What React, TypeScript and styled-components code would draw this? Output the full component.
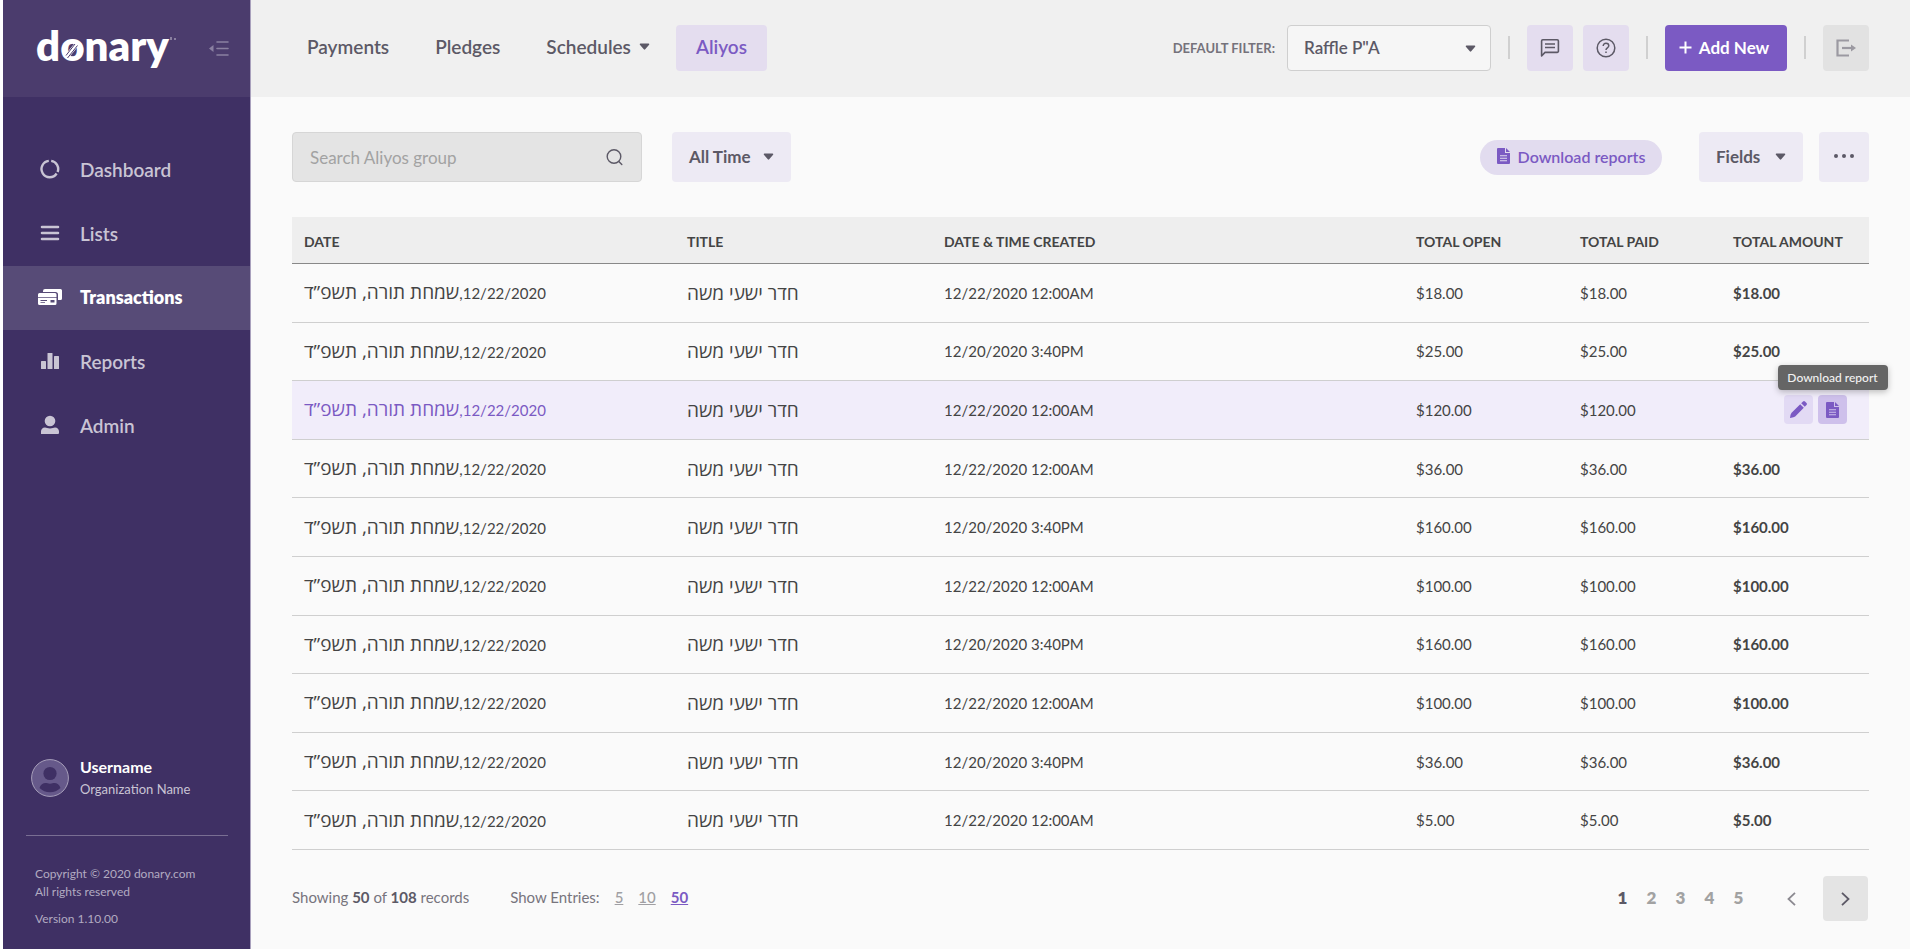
import React from 'react';
import styled, { createGlobalStyle, css } from 'styled-components';

const color = {
  purple: '#7b5ac3',
  purplePale: '#e4ddef',
  purpleFaint: '#edeaf4',
  ink: '#5c5966',
  text: '#444444',
  sidebar: '#3f3064',
  page: '#fafafa',
};

const GlobalStyle = createGlobalStyle`
  *, *::before, *::after { box-sizing: border-box; }
  body {
    margin: 0;
    background: #ffffff;
    color: ${color.text};
    font-family: Lato, 'Open Sans', 'Liberation Sans', sans-serif;
    font-size: 15px;
  }
  button, input, select { font: inherit; color: inherit; }
  button { border: 0; padding: 0; background: none; cursor: pointer; }
  a { color: inherit; text-decoration: none; }
  svg { display: block; flex: none; }
`;

const Page = styled.div`
  display: flex;
  min-height: 100vh;
  padding: 0 3px;
`;

/* ---------- Sidebar ---------- */

const Sidebar = styled.aside`
  display: flex;
  flex-direction: column;
  flex: none;
  width: 248px;
  background: ${color.sidebar};
  border-right: 1px solid #a9a1bd;
  color: #c9c4d4;
`;

const Brand = styled.div`
  display: flex;
  align-items: center;
  justify-content: space-between;
  height: 97px;
  padding: 0 21px 0 33px;
  background: #4b3c6d;
`;

const SideNav = styled.nav`
  display: flex;
  flex-direction: column;
  padding-top: 41px;
`;

const SideLink = styled.a<{ $active?: boolean }>`
  display: flex;
  align-items: center;
  gap: 17px;
  height: 64px;
  padding: 0 0 2px 34px;
  font-size: 19px;
  font-weight: 600;
  ${({ $active }) =>
    $active &&
    css`
      background: #574b77;
      color: #ffffff;
      font-size: 18px;
      font-weight: 800;
    `}
`;

const SideIcon = styled.span`
  display: flex;
  justify-content: center;
  width: 26px;
`;

const User = styled.div`
  display: flex;
  align-items: center;
  gap: 11px;
  margin-top: auto;
  padding-left: 28px;
`;

const UserName = styled.div`
  color: #ffffff;
  font-size: 16px;
  font-weight: 700;
  line-height: 22px;
`;

const UserOrg = styled.div`
  font-size: 13px;
  line-height: 22px;
`;

const Divider = styled.hr`
  width: 202px;
  height: 1px;
  margin: 35px 0 29px 23px;
  border: 0;
  background: #796e93;
`;

const Legal = styled.div`
  padding: 0 0 21px 32px;
  color: #b2abc1;
  font-size: 12px;
  line-height: 18px;
  p { margin: 0 0 9px; }
  p:last-child { margin: 0; }
`;

/* ---------- Top bar ---------- */

const Main = styled.main`
  display: flex;
  flex-direction: column;
  flex: 1;
  min-width: 0;
  background: ${color.page};
`;

const TopBar = styled.header`
  display: flex;
  align-items: center;
  height: 97px;
  padding: 0 41px 2px 36px;
  background: #f0f0f0;
`;

const Tabs = styled.nav`
  display: flex;
  align-items: center;
  gap: 6px;
`;

const Tab = styled.a<{ $active?: boolean }>`
  display: flex;
  align-items: center;
  gap: 8px;
  height: 46px;
  padding: 0 20px 2px;
  border-radius: 4px;
  color: ${({ $active }) => ($active ? color.purple : color.ink)};
  background: ${({ $active }) => ($active ? color.purplePale : 'transparent')};
  font-size: 19px;
  font-weight: 600;
`;

const Actions = styled.div`
  display: flex;
  align-items: center;
  margin-left: auto;
`;

const FilterLabel = styled.label`
  margin-right: 12px;
  color: #75727b;
  font-size: 13px;
  font-weight: 700;
`;

const SelectBox = styled.span`
  position: relative;
  width: 204px;
`;

const Select = styled.select`
  appearance: none;
  display: block;
  width: 100%;
  height: 46px;
  padding: 0 36px 0 16px;
  border: 1px solid #cfcfcf;
  border-radius: 4px;
  background: #f6f6f6;
  color: ${color.ink};
  font-size: 17px;
  font-weight: 600;
`;

const SelectCaret = styled.span`
  position: absolute;
  top: 20px;
  right: 15px;
  pointer-events: none;
`;

const Separator = styled.span`
  width: 2px;
  height: 23px;
  margin: 0 17px;
  background: #d0d0d0;
`;

const IconButton = styled.button<{ $muted?: boolean }>`
  display: flex;
  align-items: center;
  justify-content: center;
  width: 46px;
  height: 46px;
  border-radius: 4px;
  background: ${({ $muted }) => ($muted ? '#e2e2e2' : color.purplePale)};
  color: ${({ $muted }) => ($muted ? '#9b99a1' : color.ink)};
  & + & { margin-left: 10px; }
`;

const AddButton = styled.button`
  display: flex;
  align-items: center;
  justify-content: center;
  gap: 7px;
  width: 122px;
  height: 46px;
  padding-right: 4px;
  border-radius: 4px;
  background: ${color.purple};
  color: #ffffff;
  font-size: 17px;
  font-weight: 700;
`;

/* ---------- Content ---------- */

const Content = styled.div`
  flex: 1;
  padding: 35px 41px 28px;
`;

const Toolbar = styled.div`
  display: flex;
  align-items: center;
  margin-bottom: 35px;
`;

const SearchBox = styled.form`
  display: flex;
  align-items: center;
  width: 350px;
  height: 50px;
  margin-right: 30px;
  padding: 0 17px;
  border: 1px solid #d6d6d6;
  border-radius: 4px;
  background: #e4e4e4;
  color: ${color.ink};
`;

const SearchInput = styled.input`
  flex: 1;
  min-width: 0;
  padding: 0;
  border: 0;
  outline: 0;
  background: none;
  font-size: 17px;
  &::placeholder { color: #a2a2a2; opacity: 1; }
`;

const SoftButton = styled.button<{ $width: number }>`
  display: flex;
  align-items: center;
  justify-content: space-between;
  width: ${({ $width }) => $width}px;
  height: 50px;
  padding: 0 17px 2px;
  border-radius: 4px;
  background: ${color.purpleFaint};
  color: ${color.ink};
  font-size: 17px;
  font-weight: 700;
`;

const DownloadButton = styled.button`
  display: flex;
  align-items: center;
  justify-content: center;
  gap: 8px;
  width: 182px;
  height: 35px;
  margin: 0 37px 0 auto;
  padding-bottom: 2px;
  border-radius: 18px;
  background: #e2dcef;
  color: ${color.purple};
  font-size: 16px;
  font-weight: 600;
`;

const MoreButton = styled(SoftButton)`
  margin-left: 16px;
  justify-content: center;
`;

const Table = styled.table`
  width: 100%;
  height: calc(100vh - 316px);
  min-height: 520px;
  border-collapse: separate;
  border-spacing: 0;
  table-layout: fixed;
`;

const HeadCell = styled.th`
  height: 47px;
  padding: 2px 0 0 12px;
  border-bottom: 1px solid #888888;
  background: #eeeeee;
  font-size: 14px;
  font-weight: 700;
  text-align: left;
`;

const Row = styled.tr<{ $hover?: boolean }>`
  background: ${({ $hover }) => ($hover ? '#f1edfa' : 'transparent')};
`;

const Cell = styled.td<{ $accent?: boolean; $strong?: boolean }>`
  height: 48px;
  padding: 0 0 0 12px;
  border-bottom: 1px solid #cfcfcf;
  color: ${({ $accent }) => ($accent ? color.purple : color.text)};
  font-weight: ${({ $strong }) => ($strong ? 700 : 400)};
  white-space: nowrap;
`;

const Hebrew = styled.bdi`
  font-family: 'Open Sans', 'Liberation Sans', sans-serif;
  font-size: 19px;
  line-height: 20px;
`;

const HebrewDate = styled.span`
  font-family: Lato, 'Open Sans', sans-serif;
  font-size: 15px;
`;

const RowActions = styled.div`
  display: flex;
  justify-content: flex-end;
  gap: 5px;
  padding-right: 22px;
`;

const RowButton = styled.button<{ $pressed?: boolean }>`
  position: relative;
  display: flex;
  align-items: center;
  justify-content: center;
  width: 29px;
  height: 29px;
  border-radius: 4px;
  background: ${({ $pressed }) => ($pressed ? '#cec0eb' : '#e2daf4')};
  color: ${color.purple};
`;

const Tooltip = styled.span`
  position: absolute;
  bottom: 34px;
  left: 50%;
  transform: translateX(-50%);
  width: 110px;
  border-radius: 4px;
  background: #656565;
  box-shadow: 0 2px 6px rgba(0, 0, 0, 0.25);
  color: #f2f2f2;
  font-size: 12px;
  font-weight: 500;
  line-height: 25px;
  white-space: nowrap;
`;

const Footer = styled.footer`
  display: flex;
  align-items: center;
  margin-top: 26px;
  padding-right: 1px;
  color: #77747d;
`;

const Summary = styled.p`
  margin: 0 41px 0 0;
  padding-bottom: 4px;
  b { color: ${color.ink}; }
`;

const Entries = styled.div`
  display: flex;
  gap: 15px;
  padding-bottom: 4px;
`;

const EntryLink = styled.a<{ $active?: boolean }>`
  color: ${({ $active }) => ($active ? color.purple : '#a09fa3')};
  font-weight: ${({ $active }) => ($active ? 700 : 500)};
  text-decoration: underline;
`;

const Pager = styled.nav`
  display: flex;
  align-items: center;
  margin-left: auto;
`;

const PageLink = styled.a<{ $active?: boolean }>`
  width: 29px;
  padding-bottom: 2px;
  color: ${({ $active }) => ($active ? color.ink : '#a2a2a2')};
  font-size: 17px;
  font-weight: 800;
  text-align: center;
`;

const PagerButton = styled.button<{ $filled?: boolean }>`
  display: flex;
  align-items: center;
  justify-content: center;
  width: 45px;
  height: 45px;
  margin-left: ${({ $filled }) => ($filled ? 9 : 16)}px;
  border-radius: 4px;
  background: ${({ $filled }) => ($filled ? '#e4e4e4' : 'transparent')};
  color: ${({ $filled }) => ($filled ? color.ink : '#8b8990')};
`;

/* ---------- Icons ---------- */

const Logo = () => (
  <svg width="142" height="64" viewBox="0 0 142 64" role="img" aria-label="donary">
    <text x="0" y="44" fill="#fff" fontFamily="Lato" fontSize="42" fontWeight="800">
      donary
    </text>
    <path d="M30.500 40 40.500 27.500" stroke="#fff" strokeWidth="4.500" />
    <path d="M31.500 41 41.500 28.500M30 38.500 39 27" stroke="#4b3c6d" strokeWidth="1" />
    <path d="M135 20v3M139 21v2" stroke="#c9c4d4" strokeWidth="1" />
  </svg>
);

const CollapseIcon = () => (
  <svg width="20" height="16" viewBox="0 0 20 16">
    <path d="M8 1h11M8 7.500h11M8 14h11" stroke="#8a80a1" strokeWidth="1.600" strokeLinecap="round" />
    <path d="M0 7.500 4.500 4v7z" fill="#8a80a1" />
  </svg>
);

const DashboardIcon = () => (
  <svg width="20" height="20" viewBox="0 0 20 20" fill="none" stroke="currentColor" strokeWidth="2.400">
    <path d="M11.200 1.900A8.200 8.200 0 0 1 17.600 13M16.600 14.500A8.200 8.200 0 1 1 8.800 1.900" />
  </svg>
);

const ListIcon = () => (
  <svg width="20" height="16" viewBox="0 0 20 16" stroke="currentColor" strokeWidth="2.600" strokeLinecap="round">
    <path d="M2 2h16M2 8h16M2 14h16" />
  </svg>
);

const CardsIcon = () => (
  <svg width="26" height="18" viewBox="0 0 26 18">
    <path d="M8 1h15.500A1.500 1.500 0 0 1 25 2.500v8A1.500 1.500 0 0 1 23.500 12H21V6.500A2.500 2.500 0 0 0 18.500 4H6V3a2 2 0 0 1 2-2z" fill="currentColor" />
    <path
      fillRule="evenodd"
      d="M2.500 5H18a1.500 1.500 0 0 1 1.500 1.500v9A1.500 1.500 0 0 1 18 17H2.500A1.500 1.500 0 0 1 1 15.500v-9A1.500 1.500 0 0 1 2.500 5zM1 9v.8h18.500V9zM3.500 12v.9h6.500v-.9zM3.500 14.200v.9H8v-.9zM13.500 12v2.500h4V12z"
      fill="currentColor"
    />
  </svg>
);

const ReportsIcon = () => (
  <svg width="20" height="18" viewBox="0 0 20 18" fill="currentColor">
    <rect x="1" y="9" width="5" height="8" rx=".5" />
    <rect x="7.500" y="1" width="5" height="16" rx=".5" />
    <rect x="14" y="4" width="5" height="13" rx=".5" />
  </svg>
);

const AdminIcon = () => (
  <svg width="20" height="20" viewBox="0 0 20 20" fill="currentColor">
    <circle cx="10" cy="6" r="5.300" />
    <path d="M1 19v-2.500c0-2 1.500-4 4-4 1.500 0 2.500 1 5 1s3.500-1 5-1c2.500 0 4 2 4 4V18a1 1 0 0 1-1 1z" />
  </svg>
);

const Avatar = () => (
  <svg width="38" height="38" viewBox="0 0 38 38">
    <circle cx="19" cy="19" r="18.400" fill="#66598a" stroke="#a79fba" />
    <circle cx="19" cy="14.500" r="6.600" fill="#3f3064" />
    <path d="M8.500 29c1-3.500 3.500-5 6-5 1.500 0 2.500.7 4.500.7s3-.7 4.500-.7c2.500 0 5 1.500 6 5a15 15 0 0 1-21 0z" fill="#3f3064" />
  </svg>
);

const Caret = () => (
  <svg width="11" height="7" viewBox="0 0 11 7">
    <path d="M1.500.5h8c.7 0 1 .7.6 1.200L6.200 6.300a.9.900 0 0 1-1.400 0L.9 1.700C.5 1.200.8.5 1.500.5z" fill="#5c5966" />
  </svg>
);

const ChatIcon = () => (
  <svg width="20" height="20" viewBox="0 0 20 20" fill="none" stroke="currentColor" strokeWidth="1.600" strokeLinejoin="round">
    <path d="M2.800 1.800h14.400a1.200 1.200 0 0 1 1.200 1.200v10.200a1.200 1.200 0 0 1-1.200 1.200H5L1.600 18V3a1.200 1.200 0 0 1 1.200-1.200z" />
    <path d="M5 6h10M5 9.500h10" />
  </svg>
);

const HelpIcon = () => (
  <svg width="20" height="20" viewBox="0 0 20 20" fill="none" stroke="currentColor" strokeWidth="1.500">
    <circle cx="10" cy="10" r="8.800" />
    <path d="M7.200 8c0-1.600 1.200-2.800 2.800-2.800s2.800 1.100 2.800 2.600c0 2-2.800 2.100-2.800 4.100" />
    <path d="M10 13.400v1.700" />
  </svg>
);

const PlusIcon = () => (
  <svg width="13" height="13" viewBox="0 0 13 13" stroke="currentColor" strokeWidth="2">
    <path d="M6.500.5v12M.5 6.500h12" />
  </svg>
);

const LogoutIcon = () => (
  <svg width="20" height="18" viewBox="0 0 20 18" fill="none" stroke="currentColor" strokeWidth="2.200">
    <path d="M13 1.500H1.500v15H13" />
    <path d="M6 9h10" />
    <path d="M15 5.500 20 9l-5 3.500z" fill="currentColor" stroke="none" />
  </svg>
);

const SearchIcon = () => (
  <svg width="19" height="19" viewBox="0 0 19 19" fill="none" stroke="currentColor" strokeWidth="1.400" strokeLinecap="round">
    <circle cx="9" cy="8.500" r="6.800" />
    <path d="m13.800 13.500 3 3" />
  </svg>
);

const FileIcon = () => (
  <svg width="13" height="16" viewBox="0 0 13 16">
    <path
      fillRule="evenodd"
      d="M1 0h7v5h5v10a1 1 0 0 1-1 1H1a1 1 0 0 1-1-1V1a1 1 0 0 1 1-1zM3 7.200v1h7v-1zM3 9.700v1h7v-1zM3 12.200v1h7v-1z"
      fill="currentColor"
    />
    <path d="M9 0l4 4H9z" fill="currentColor" />
  </svg>
);

const PencilIcon = () => (
  <svg width="17" height="17" viewBox="0 0 17 17" fill="currentColor">
    <path d="M10.200 3.200 13.800 6.800 5.200 15.400Q4.300 16.300 0 17 .300 13 1.600 11.800z" />
    <path d="M11.200 2.200 13 .5a1.500 1.500 0 0 1 2 0L16.500 2a1.500 1.500 0 0 1 0 2L14.800 5.800z" />
  </svg>
);

const DotsIcon = () => (
  <svg width="22" height="6" viewBox="0 0 22 6" fill="currentColor">
    <circle cx="3" cy="3" r="2" />
    <circle cx="11" cy="3" r="2" />
    <circle cx="19" cy="3" r="2" />
  </svg>
);

const Chevron = ({ left }: { left?: boolean }) => (
  <svg width="9" height="14" viewBox="0 0 9 14" fill="none" stroke="currentColor" strokeWidth="1.800">
    <path d={left ? 'M8 .8 1.500 7 8 13.200' : 'M1 .8 7.500 7 1 13.200'} />
  </svg>
);

/* ---------- Data ---------- */

const sideLinks = [
  { label: 'Dashboard', Icon: DashboardIcon },
  { label: 'Lists', Icon: ListIcon },
  { label: 'Transactions', Icon: CardsIcon, active: true },
  { label: 'Reports', Icon: ReportsIcon },
  { label: 'Admin', Icon: AdminIcon },
];

const columns = [
  { label: 'DATE', width: 383 },
  { label: 'TITLE', width: 257 },
  { label: 'DATE & TIME CREATED', width: 472 },
  { label: 'TOTAL OPEN', width: 164 },
  { label: 'TOTAL PAID', width: 153 },
  { label: 'TOTAL AMOUNT', width: 148 },
];

const rows = [
  { created: '12/22/2020 12:00AM', amount: '$18.00' },
  { created: '12/20/2020 3:40PM', amount: '$25.00' },
  { created: '12/22/2020 12:00AM', amount: '$120.00', hover: true },
  { created: '12/22/2020 12:00AM', amount: '$36.00' },
  { created: '12/20/2020 3:40PM', amount: '$160.00' },
  { created: '12/22/2020 12:00AM', amount: '$100.00' },
  { created: '12/20/2020 3:40PM', amount: '$160.00' },
  { created: '12/22/2020 12:00AM', amount: '$100.00' },
  { created: '12/20/2020 3:40PM', amount: '$36.00' },
  { created: '12/22/2020 12:00AM', amount: '$5.00' },
];

export default function App() {
  return (
    <>
      <GlobalStyle />
      <Page>
        <Sidebar>
          <Brand>
            <Logo />
            <button type="button" aria-label="Collapse menu">
              <CollapseIcon />
            </button>
          </Brand>
          <SideNav>
            {sideLinks.map(({ label, Icon, active }) => (
              <SideLink key={label} href="#" $active={active}>
                <SideIcon>
                  <Icon />
                </SideIcon>
                {label}
              </SideLink>
            ))}
          </SideNav>
          <User>
            <Avatar />
            <div>
              <UserName>Username</UserName>
              <UserOrg>Organization Name</UserOrg>
            </div>
          </User>
          <Divider />
          <Legal>
            <p>
              Copyright © 2020 donary.com
              <br />
              All rights reserved
            </p>
            <p>Version 1.10.00</p>
          </Legal>
        </Sidebar>

        <Main>
          <TopBar>
            <Tabs>
              <Tab href="#">Payments</Tab>
              <Tab href="#">Pledges</Tab>
              <Tab href="#">
                Schedules <Caret />
              </Tab>
              <Tab href="#" $active>
                Aliyos
              </Tab>
            </Tabs>
            <Actions>
              <FilterLabel htmlFor="default-filter">DEFAULT FILTER:</FilterLabel>
              <SelectBox>
                <Select id="default-filter" defaultValue="raffle">
                  <option value="raffle">Raffle P"A</option>
                </Select>
                <SelectCaret>
                  <Caret />
                </SelectCaret>
              </SelectBox>
              <Separator />
              <IconButton type="button" aria-label="Messages">
                <ChatIcon />
              </IconButton>
              <IconButton type="button" aria-label="Help">
                <HelpIcon />
              </IconButton>
              <Separator />
              <AddButton type="button">
                <PlusIcon />
                Add New
              </AddButton>
              <Separator />
              <IconButton type="button" aria-label="Log out" $muted>
                <LogoutIcon />
              </IconButton>
            </Actions>
          </TopBar>

          <Content>
            <Toolbar>
              <SearchBox role="search">
                <SearchInput type="text" aria-label="Search Aliyos group" placeholder="Search Aliyos group" />
                <SearchIcon />
              </SearchBox>
              <SoftButton type="button" $width={119}>
                All Time <Caret />
              </SoftButton>
              <DownloadButton type="button">
                <FileIcon />
                Download reports
              </DownloadButton>
              <SoftButton type="button" $width={104}>
                Fields <Caret />
              </SoftButton>
              <MoreButton type="button" $width={50} aria-label="More options">
                <DotsIcon />
              </MoreButton>
            </Toolbar>

            <Table>
              <colgroup>
                {columns.map(({ label, width }) => (
                  <col key={label} width={width} />
                ))}
              </colgroup>
              <thead>
                <tr>
                  {columns.map(({ label }) => (
                    <HeadCell key={label}>{label}</HeadCell>
                  ))}
                </tr>
              </thead>
              <tbody>
                {rows.map(({ created, amount, hover }, i) => (
                  <Row key={i} $hover={hover}>
                    <Cell $accent={hover}>
                      <Hebrew dir="rtl">
                        <HebrewDate>12/22/2020,</HebrewDate>שמחת תורה, תשפ”ד
                      </Hebrew>
                    </Cell>
                    <Cell>
                      <Hebrew dir="rtl">חדר ישעי משה</Hebrew>
                    </Cell>
                    <Cell>{created}</Cell>
                    <Cell>{amount}</Cell>
                    <Cell>{amount}</Cell>
                    <Cell $strong>
                      {hover ? (
                        <RowActions>
                          <RowButton type="button" aria-label="Edit">
                            <PencilIcon />
                          </RowButton>
                          <RowButton type="button" $pressed aria-describedby="download-tip">
                            <FileIcon />
                            <Tooltip role="tooltip" id="download-tip">
                              Download report
                            </Tooltip>
                          </RowButton>
                        </RowActions>
                      ) : (
                        amount
                      )}
                    </Cell>
                  </Row>
                ))}
              </tbody>
            </Table>

            <Footer>
              <Summary>
                Showing <b>50</b> of <b>108</b> records
              </Summary>
              <Entries>
                <span>Show Entries:</span>
                <EntryLink href="#">5</EntryLink>
                <EntryLink href="#">10</EntryLink>
                <EntryLink href="#" $active>
                  50
                </EntryLink>
              </Entries>
              <Pager aria-label="Pages">
                {[1, 2, 3, 4, 5].map((n) => (
                  <PageLink key={n} href="#" $active={n === 1}>
                    {n}
                  </PageLink>
                ))}
                <PagerButton type="button" aria-label="Previous page">
                  <Chevron left />
                </PagerButton>
                <PagerButton type="button" aria-label="Next page" $filled>
                  <Chevron />
                </PagerButton>
              </Pager>
            </Footer>
          </Content>
        </Main>
      </Page>
    </>
  );
}
